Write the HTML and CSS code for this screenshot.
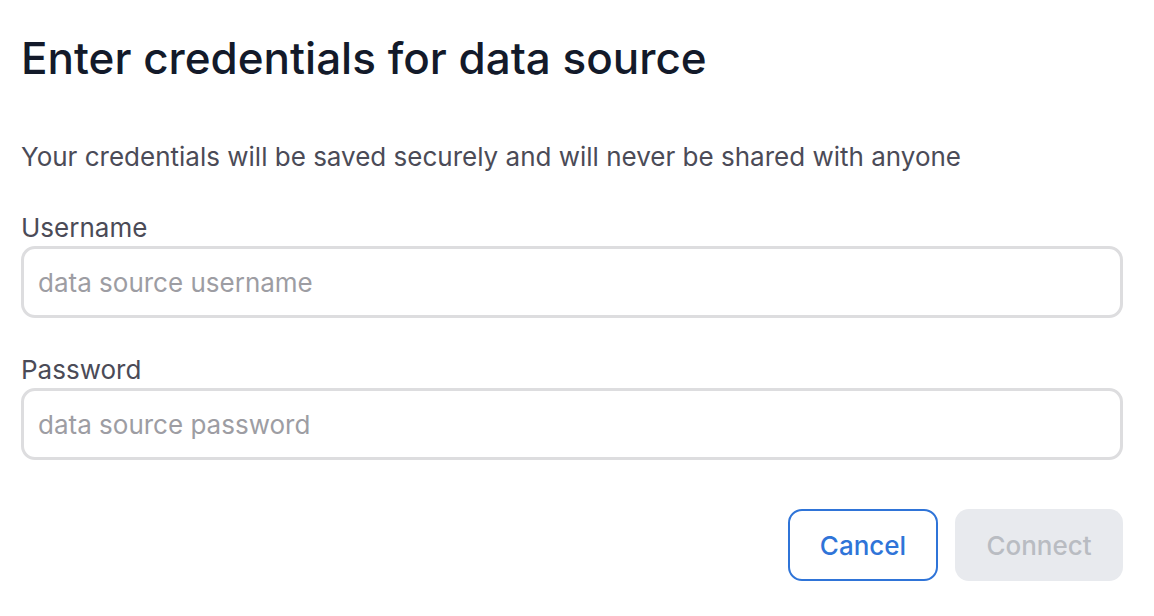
FILE: index.html
```html
<!DOCTYPE html>
<html>
<head>
<meta charset="utf-8">
<link rel="stylesheet" href="styles.css">
</head>
<body>
<div class="dialog">
  <h1 class="title">Enter credentials for data source</h1>
  <p class="desc">Your credentials will be saved securely and will never be shared with anyone</p>
  <div class="field">
    <label class="label">Username</label>
    <input class="input" type="text" placeholder="data source username">
  </div>
  <div class="field">
    <label class="label">Password</label>
    <input class="input" type="password" placeholder="data source password">
  </div>
  <div class="actions">
    <button class="btn btn-cancel">Cancel</button>
    <button class="btn btn-connect" disabled>Connect</button>
  </div>
</div>
</body>
</html>
```
FILE: styles.css
```css
html, body {
  margin: 0;
  padding: 0;
  background: #ffffff;
}
body {
  font-family: Inter, "Noto Sans", sans-serif;
}
.dialog {
  padding: 26px 31px 0 21px;
  display: flex;
  flex-direction: column;
}
.title {
  margin: 0;
  font-size: 44px;
  font-weight: 500;
  line-height: 64px;
  color: #131a2a;
}
.desc {
  margin: 49px 0 0 0;
  font-size: 26px;
  line-height: 36px;
  color: #4b4b57;
}
.field {
  display: flex;
  flex-direction: column;
  margin-top: 35px;
}
.field + .field {
  margin-top: 34px;
}
.label {
  font-size: 26px;
  line-height: 36px;
  color: #4b4b57;
}
.input {
  box-sizing: border-box;
  height: 72px;
  border: 3px solid #dddddf;
  border-radius: 14px;
  padding: 0 14px;
  font-family: Inter, "Noto Sans", sans-serif;
  font-size: 26px;
  color: #222;
  outline: none;
  background: #fff;
}
.input::placeholder {
  color: #9d9da3;
}
.actions {
  display: flex;
  justify-content: flex-end;
  gap: 17px;
  margin-top: 49px;
}
.btn {
  box-sizing: border-box;
  height: 72px;
  border-radius: 14px;
  font-family: Inter, "Noto Sans", sans-serif;
  font-size: 26px;
  font-weight: 500;
  padding: 0;
}
.btn-cancel {
  width: 150px;
  background: #fff;
  border: 2px solid #2f74d8;
  color: #2f74d8;
}
.btn-connect {
  width: 168px;
  background: #e8eaee;
  border: none;
  color: #b9bcc2;
}
```
